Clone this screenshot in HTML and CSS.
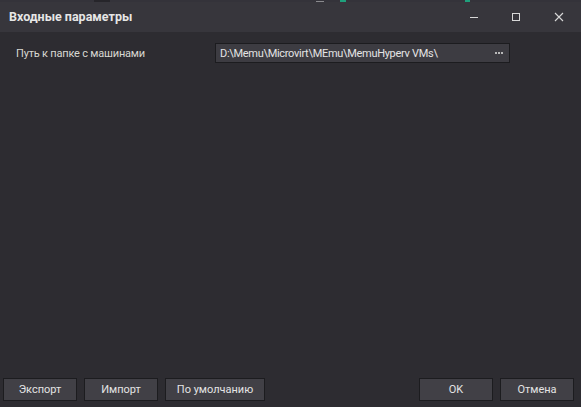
FILE: index.html
```html
<!DOCTYPE html>
<html>
<head>
<meta charset="utf-8">
<link rel="stylesheet" href="styles.css">
</head>
<body>
<div class="window">
  <div class="strip">
    <span class="seg seg-dark"></span>
    <span class="seg seg-gray"></span>
    <span class="seg seg-green1"></span>
    <span class="seg seg-green2"></span>
  </div>
  <div class="titlebar">
    <div class="title">Входные параметры</div>
    <div class="controls">
      <span class="ctl"><svg width="10" height="10" viewBox="0 0 10 10"><path d="M1 5.5H9" stroke="#d8d8d8" stroke-width="1"/></svg></span>
      <span class="ctl"><svg width="10" height="10" viewBox="0 0 10 10"><rect x="1.5" y="1.5" width="7" height="7" fill="none" stroke="#d8d8d8" stroke-width="1"/></svg></span>
      <span class="ctl"><svg width="10" height="10" viewBox="0 0 10 10"><path d="M1 1L9 9M9 1L1 9" stroke="#d8d8d8" stroke-width="1.1"/></svg></span>
    </div>
  </div>
  <div class="content">
    <div class="row">
      <div class="label">Путь к папке с машинами</div>
      <div class="field">
        <span class="value">D:\Memu\Microvirt\MEmu\MemuHyperv VMs\</span>
        <span class="dots"><i></i><i></i><i></i></span>
      </div>
    </div>
  </div>
  <div class="footer">
    <div class="group">
      <button class="btn btn-s">Экспорт</button>
      <button class="btn btn-s">Импорт</button>
      <button class="btn btn-l">По умолчанию</button>
    </div>
    <div class="group">
      <button class="btn btn-s">OK</button>
      <button class="btn btn-s">Отмена</button>
    </div>
  </div>
</div>
</body>
</html>
```
FILE: styles.css
```css
html, body {
  margin: 0;
  padding: 0;
  background: #2d2c31;
}
.window {
  width: 581px;
  height: 407px;
  display: flex;
  flex-direction: column;
  background: #2d2c31;
  font-family: Roboto, "Noto Sans", sans-serif;
  color: #e4e4e4;
  overflow: hidden;
}
.strip {
  height: 2px;
  background: #34333a;
  display: flex;
  flex-shrink: 0;
}
.seg { display: block; height: 2px; }
.seg-dark { margin-left: 94px; width: 16px; background: #26252a; }
.seg-gray { margin-left: 206px; width: 8px; height: 1px; margin-top: 1px; background: #8a8a8e; }
.seg-green1 { margin-left: 16px; width: 6px; background: #1fa07c; }
.seg-green2 { margin-left: 119px; width: 5px; background: #1fa07c; }
.titlebar {
  height: 30px;
  background: #37363c;
  display: flex;
  align-items: center;
  justify-content: space-between;
  flex-shrink: 0;
}
.title {
  padding-left: 9px;
  font-size: 12.5px;
  font-weight: 700;
  color: #e6e6e6;
  margin-top: -1px;
}
.controls {
  display: flex;
  height: 100%;
}
.ctl {
  width: 42px;
  display: flex;
  align-items: center;
  justify-content: center;
  margin-top: -1px;
}
.ctl:last-child { width: 44px; }
.content {
  flex: 1;
  padding: 11px 0 0 16px;
}
.row {
  display: flex;
  align-items: center;
}
.label {
  width: 199px;
  font-size: 11px;
  letter-spacing: -0.2px;
  color: #d8d8d2;
}
.field {
  height: 18px;
  border: 1px solid #1c1c1f;
  background: #3d3c42;
  display: flex;
  align-items: center;
  justify-content: space-between;
  padding: 0 6px 0 4px;
  box-sizing: content-box;
  width: 283px;
}
.value {
  font-size: 11px;
  letter-spacing: -0.3px;
  color: #e4e4e4;
}
.dots { display: flex; gap: 1px; }
.dots i { display: block; width: 2px; height: 2px; background: #b8b8b8; }
.footer {
  display: flex;
  justify-content: space-between;
  padding: 0 7px 6px 3px;
}
.group { display: flex; gap: 7px; }
.btn {
  height: 23px;
  background: #414046;
  border: 1px solid #1c1c1f;
  color: #e4e4e4;
  font-family: Roboto, "Noto Sans", sans-serif;
  font-size: 11px;
  padding: 0;
  margin: 0;
}
.btn-s { width: 74px; }
.btn-l { width: 100px; }
```
